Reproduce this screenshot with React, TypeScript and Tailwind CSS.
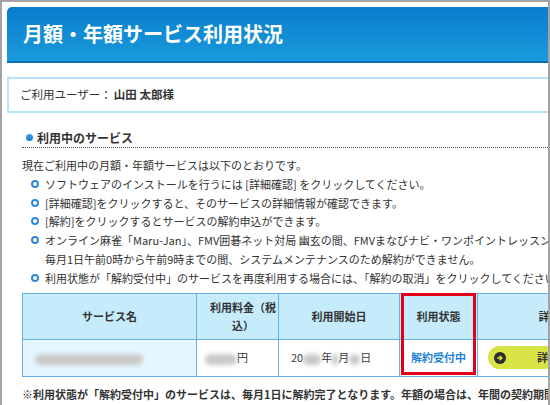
import { ReactNode } from 'react';

function Blur({ w }: { w: number }) {
  return (
    <span
      className="inline-block h-[11px] rounded-full bg-[#c9c9c9] align-middle blur-[2px]"
      style={{ width: w }}
    />
  );
}

function Ring({ children }: { children: ReactNode }) {
  return (
    <li className="flex whitespace-nowrap">
      <span className="mr-[6px] ml-[9px] mt-[5px] h-[8px] w-[8px] shrink-0 rounded-full border-2 border-[#2a8ad9]" />
      <span>{children}</span>
    </li>
  );
}

export default function App() {
  return (
    <div
      className="h-[405px] w-[550px] overflow-hidden border-x-2 border-t-2 border-[#a3a3a3] bg-white text-[11px] text-[#333]"
      style={{ fontFamily: '"Noto Sans CJK JP", "Noto Sans", sans-serif' }}
    >
      <div className="w-[760px] pt-[5px] pl-[5px]">
        {/* page title */}
        <div className="flex h-[56px] items-center rounded-tl-[5px] border-b-2 border-[#0b6fb6] bg-gradient-to-b from-[#0a7dcd] to-[#1a9bdb] pl-[16px]">
          <h1 className="text-[20px] font-bold text-white">月額・年額サービス利用状況</h1>
        </div>

        {/* user */}
        <div className="mt-[14px] flex h-[36px] items-center border-2 border-[#b6e3f9] pl-[11px] text-[11.5px]">
          ご利用ユーザー： <span className="ml-[2px] font-bold">山田 太郎様</span>
        </div>

        <div className="ml-[15px]">
          <div className="mt-[15px] flex items-center border-b border-dotted border-[#555] leading-[19px]">
            <span className="mr-[4px] ml-[4px] h-[7px] w-[7px] rounded-full bg-gradient-to-b from-[#3fa2ec] to-[#1677c9]" />
            <span className="text-[12px] font-bold">利用中のサービス</span>
          </div>

          <div className="mt-[8px] leading-[18.8px]">
            <p className="whitespace-nowrap">現在ご利用中の月額・年額サービスは以下のとおりです。</p>
            <ul>
              <Ring>ソフトウェアのインストールを行うには [詳細確認] をクリックしてください。</Ring>
              <Ring>[詳細確認]をクリックすると、そのサービスの詳細情報が確認できます。</Ring>
              <Ring>[解約]をクリックするとサービスの解約申込ができます。</Ring>
              <Ring>
                オンライン麻雀「Maru-Jan」、FMV囲碁ネット対局 幽玄の間、FMVまなびナビ・ワンポイントレッスンズは、
                <br />
                毎月1日午前0時から午前9時までの間、システムメンテナンスのため解約ができません。
              </Ring>
              <Ring>利用状態が「解約受付中」のサービスを再度利用する場合には、「解約の取消」をクリックしてください。</Ring>
            </ul>
          </div>

          {/* services table */}
          <div className="relative mt-[5px] w-[600px]">
            <table className="w-full table-fixed border-collapse border border-[#63b2e6]">
              <thead>
                <tr className="h-[46px] bg-[#c6ecfc] font-bold leading-[18px]">
                  <th className="w-[174px] border border-[#63b2e6] font-bold">サービス名</th>
                  <th className="w-[82px] border border-[#63b2e6] pl-[12px] pr-[1px] text-center font-bold [line-break:anywhere]">
                    利用料金（税込）
                  </th>
                  <th className="w-[121px] border border-[#63b2e6] font-bold">利用開始日</th>
                  <th className="w-[78px] border border-[#63b2e6] font-bold">利用状態</th>
                  <th className="border border-[#63b2e6] font-bold">詳細</th>
                </tr>
              </thead>
              <tbody>
                <tr className="h-[37px]">
                  <td className="border border-[#63b2e6] bg-[#e5f6fe] pl-[12px]">
                    <Blur w={108} />
                  </td>
                  <td className="border border-[#63b2e6] pl-[8px]">
                    <Blur w={32} />円
                  </td>
                  <td className="border border-[#63b2e6] pl-[12px]">
                    20<Blur w={18} />年<Blur w={6} />月<Blur w={11} />日
                  </td>
                  <td className="border border-[#63b2e6] text-center font-bold text-[#1e82d9]">解約受付中</td>
                  <td className="border border-[#63b2e6] pl-[10px]">
                    <div className="flex h-[23px] w-[110px] items-center rounded-full bg-[#d8e345] pl-[6px]">
                      <svg viewBox="0 0 16 16" className="h-[12px] w-[12px]">
                        <circle cx="8" cy="8" r="8" fill="#2b2b2b" />
                        <path d="M4 8h6M7.5 5l3 3-3 3" stroke="#d8e345" strokeWidth="2" fill="none" />
                      </svg>
                      <span className="ml-[31px] font-bold">詳細確認</span>
                    </div>
                  </td>
                </tr>
              </tbody>
            </table>
            <div className="absolute top-0 left-[379px] h-[82px] w-[75px] border-[3px] border-[#e5001a]" />
          </div>

          <p className="mt-[8px] whitespace-nowrap font-bold leading-[19px]">
            ※利用状態が「解約受付中」のサービスは、毎月1日に解約完了となります。年額の場合は、年間の契約期間満了日に解約完了となります。
          </p>
        </div>
      </div>
    </div>
  );
}
